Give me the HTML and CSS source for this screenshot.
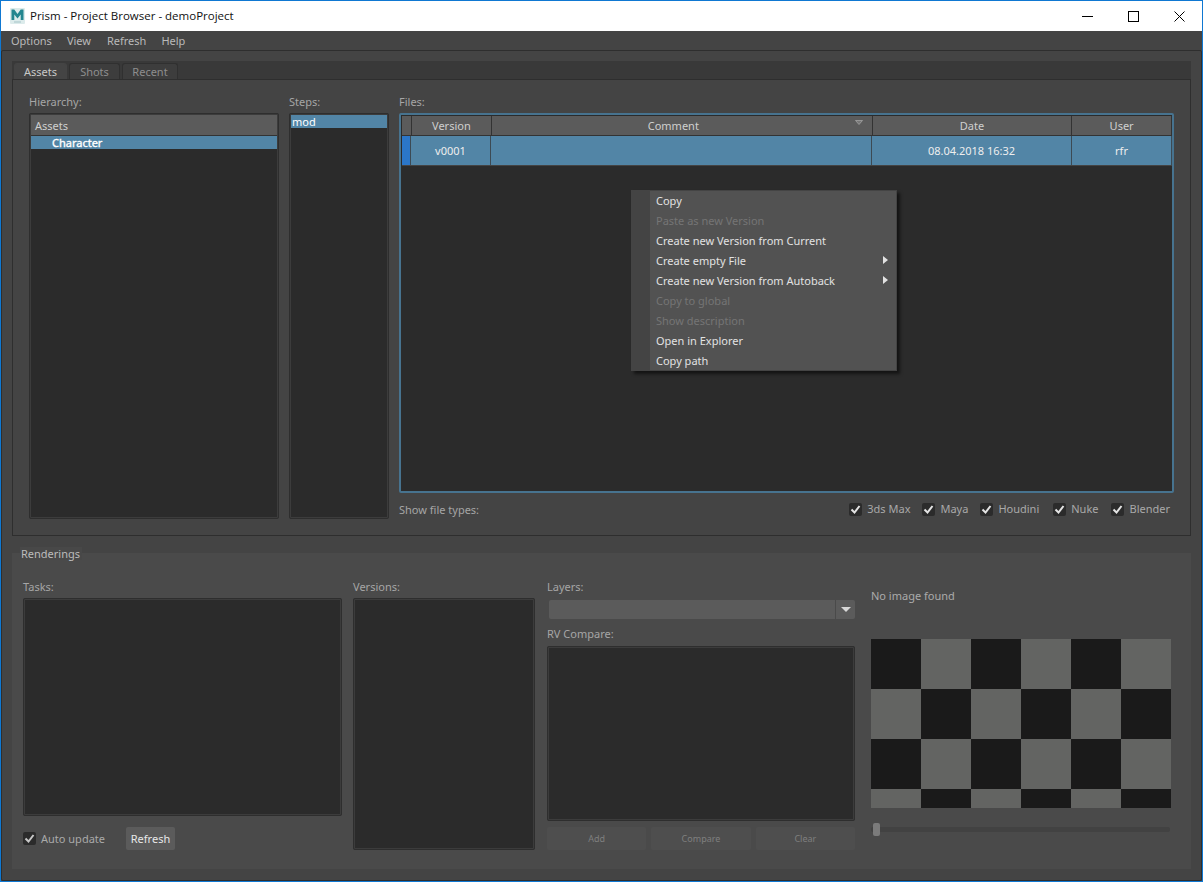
FILE: index.html
```html
<!DOCTYPE html>
<html lang="en">
<head>
<meta charset="utf-8">
<title>Prism - Project Browser - demoProject</title>
<link rel="stylesheet" href="styles.css">
</head>
<body>
<div class="window">
  <header class="titlebar">
    <svg class="logo" width="15" height="16" viewBox="0 0 15 16"><rect width="15" height="16" rx="1" fill="#dcebeb"/><path d="M1.500 12V1.500h2.800L7.500 6l3.200-4.500h2.800V12h-2.800V6.500L7.500 10.500 4.300 6.500V12z" fill="#23868f"/><rect x="4" y="13.500" width="7" height="1" fill="#a3c4c8"/></svg>
    <span class="title">Prism - Project Browser - demoProject</span>
    <div class="winbtns">
      <span class="winbtn"><svg width="11" height="11" viewBox="0 0 11 11"><path d="M0 5.500h11" stroke="#000" fill="none"/></svg></span>
      <span class="winbtn"><svg width="11" height="11" viewBox="0 0 11 11"><rect x=".5" y=".5" width="10" height="10" stroke="#000" fill="none"/></svg></span>
      <span class="winbtn"><svg width="11" height="11" viewBox="0 0 11 11"><path d="M.5 .5l10 10M10.500 .5l-10 10" stroke="#000" fill="none"/></svg></span>
    </div>
  </header>
  <nav class="menubar">
    <span class="menu-item">Options</span>
    <span class="menu-item menu-view">View</span>
    <span class="menu-item">Refresh</span>
    <span class="menu-item">Help</span>
  </nav>
  <main class="central">
    <div class="tabbar">
      <span class="tab tab-active">Assets</span>
      <span class="tab tab-shots">Shots</span>
      <span class="tab tab-recent">Recent</span>
    </div>
    <section class="pane">
      <div class="col col-hier">
        <div class="label">Hierarchy:</div>
        <div class="list list-fill">
          <div class="tree-head">Assets</div>
          <div class="tree-row">Character</div>
        </div>
      </div>
      <div class="col col-steps">
        <div class="label">Steps:</div>
        <div class="list list-fill">
          <div class="step-row">mod</div>
        </div>
      </div>
      <div class="col col-files">
        <div class="label">Files:</div>
        <div class="files">
          <div class="thead">
            <span class="th c-corner"></span>
            <span class="th c-ver">Version</span>
            <span class="th c-com-h">Comment<svg class="sort" width="8" height="5" viewBox="0 0 8 5"><path d="M.5 .5h7L4 4.500z" fill="#777" stroke="#aaa" stroke-width=".7"/></svg></span>
            <span class="th c-date">Date</span>
            <span class="th c-user">User</span>
          </div>
          <div class="trow">
            <span class="td c-mark"></span>
            <span class="td c-ver">v0001</span>
            <span class="td c-com"></span>
            <span class="td c-date">08.04.2018 16:32</span>
            <span class="td c-user">rfr</span>
          </div>
          <div class="ctx">
            <div class="ctx-item">Copy</div>
            <div class="ctx-item is-off">Paste as new Version</div>
            <div class="ctx-item">Create new Version from Current</div>
            <div class="ctx-item">Create empty File<i class="ctx-arrow"></i></div>
            <div class="ctx-item">Create new Version from Autoback<i class="ctx-arrow"></i></div>
            <div class="ctx-item is-off">Copy to global</div>
            <div class="ctx-item is-off">Show description</div>
            <div class="ctx-item">Open in Explorer</div>
            <div class="ctx-item">Copy path</div>
          </div>
        </div>
        <div class="types">
          <span class="label-inline">Show file types:</span>
          <div class="checks">
            <label class="check c1"><span class="box"><svg width="13" height="13" viewBox="0 0 13 13"><path d="M2.500 6.500l3 3 5-6.500" stroke="#e4e4e4" stroke-width="2" fill="none"/></svg></span>3ds Max</label>
            <label class="check c2"><span class="box"><svg width="13" height="13" viewBox="0 0 13 13"><path d="M2.500 6.500l3 3 5-6.500" stroke="#e4e4e4" stroke-width="2" fill="none"/></svg></span>Maya</label>
            <label class="check c3"><span class="box"><svg width="13" height="13" viewBox="0 0 13 13"><path d="M2.500 6.500l3 3 5-6.500" stroke="#e4e4e4" stroke-width="2" fill="none"/></svg></span>Houdini</label>
            <label class="check c4"><span class="box"><svg width="13" height="13" viewBox="0 0 13 13"><path d="M2.500 6.500l3 3 5-6.500" stroke="#e4e4e4" stroke-width="2" fill="none"/></svg></span>Nuke</label>
            <label class="check c5"><span class="box"><svg width="13" height="13" viewBox="0 0 13 13"><path d="M2.500 6.500l3 3 5-6.500" stroke="#e4e4e4" stroke-width="2" fill="none"/></svg></span>Blender</label>
          </div>
        </div>
      </div>
    </section>
    <section class="group">
      <span class="legend">Renderings</span>
      <div class="col col-tasks">
        <div class="label">Tasks:</div>
        <div class="list tasks-list"></div>
        <div class="tasks-foot">
          <label class="check auto"><span class="box"><svg width="13" height="13" viewBox="0 0 13 13"><path d="M2.500 6.500l3 3 5-6.500" stroke="#c8c8c8" stroke-width="2" fill="none"/></svg></span>Auto update</label>
          <button class="btn">Refresh</button>
        </div>
      </div>
      <div class="col col-versions">
        <div class="label">Versions:</div>
        <div class="list versions-list"></div>
      </div>
      <div class="col col-layers">
        <div class="label">Layers:</div>
        <div class="combo"><span class="combo-field"></span><span class="combo-btn"><i class="combo-arrow"></i></span></div>
        <div class="label label-rv">RV Compare:</div>
        <div class="list rv-list"></div>
        <div class="rv-btns">
          <button class="btn-off">Add</button>
          <button class="btn-off">Compare</button>
          <button class="btn-off">Clear</button>
        </div>
      </div>
      <div class="col col-preview">
        <div class="noimage">No image found</div>
        <div class="checker"></div>
        <div class="slider"><span class="handle"></span></div>
      </div>
    </section>
  </main>
</div>
</body>
</html>
```
FILE: styles.css
```css
* { box-sizing: border-box; }
html, body { margin: 0; padding: 0; }
body { width: 1203px; height: 882px; overflow: hidden; background: #444; font: 11px/16px "Noto Sans", "Open Sans", sans-serif; color: #bdbdbd; }
.window { width: 1203px; height: 882px; border: 1px solid #0f78d2; display: flex; flex-direction: column; }

.titlebar { height: 30px; flex: none; background: #fff; display: flex; align-items: center; padding-left: 9px; color: #000; }
.logo { flex: none; margin-top: 0; }
.title { margin-left: 5px; font: 11.500px/16px "Open Sans", sans-serif; color: #111; }
.winbtns { margin-left: auto; display: flex; }
.winbtn { width: 46px; height: 30px; display: flex; align-items: center; justify-content: center; }

.menubar { height: 19px; flex: none; background: #444; display: flex; padding-left: 10px; gap: 15px; align-items: center; color: #b9b9b9; }
.menu-view { margin-right: 1px; }

.central { flex: 1; min-height: 0; background: #444; border: 1px solid #2e2e2e; border-radius: 2px; padding: 10px 10px 0 10px; margin: 0; }
.tabbar { height: 18px; background: #393939; display: flex; padding-left: 2px; gap: 2px; align-items: flex-end; }
.tab { height: 16px; line-height: 15px; text-align: center; color: #8e8e8e; background: #3d3d3d; border: 1px solid #303030; border-bottom: 0; border-radius: 3px 3px 0 0; }
.tab-active { width: 53px; background: #444; color: #c8c8c8; border-color: #444; }
.tab-shots { width: 51px; }
.tab-recent { width: 56px; }

.pane { height: 457px; border: 1px solid #2e2e2e; display: flex; gap: 10px; padding: 16px; }
.col { display: flex; flex-direction: column; flex: none; }
.col-hier { width: 250px; }
.col-steps { width: 100px; }
.col-files { width: 775px; }
.label { height: 17px; line-height: 11px; color: #a6a6a6; }

.list { background: #2b2b2b; border: 2px solid #3c3c3c; outline: 1px solid #2e2e2e; outline-offset: -1px; border-radius: 2px; }
.list-fill { flex: 1; }
.tree-head { height: 21px; line-height: 22px; padding-left: 4px; background: #5b5b5b; color: #cfcfcf; border-bottom: 1px solid #333; }
.tree-row { height: 13px; line-height: 13px; padding-left: 21px; background: #5285a6; color: #fff; -webkit-text-stroke: .35px #fff; }
.step-row { height: 13px; line-height: 13px; padding-left: 1px; background: #5285a6; color: #fff; }

.files { height: 380px; position: relative; background: #2b2b2b; border: 2px solid #47738f; border-radius: 2px; padding: 1px 0 0 1px; }
.thead { display: flex; height: 20px; }
.th { background: #5b5b5b; border-right: 1px solid #333; border-bottom: 1px solid #333; text-align: center; line-height: 19px; color: #cfcfcf; position: relative; }
.trow { display: flex; height: 30px; border-bottom: 1px solid #444; }
.td { background: #5285a6; border-right: 1px solid #3c4a54; text-align: center; line-height: 29px; color: #eee; }
.c-corner { width: 10px; }
.c-mark { width: 9px; background: #2b76c8; }
.c-ver { width: 80px; }
.c-com { width: 381px; }
.c-com-h { width: 382px; padding-right: 17px; }
.c-date { width: 200px; }
.c-user { width: 100px; }
.sort { position: absolute; right: 9px; top: 4px; }

.ctx { position: absolute; left: 230px; top: 75px; width: 266px; height: 181px; padding: 0 0 0 18px; background: #444; border: 1px solid #444; box-shadow: 3px 3px 3px rgba(0,0,0,.55); }
.ctx::before { content: ""; position: absolute; left: 18px; right: 0; top: 0; bottom: 0; background: #525252; }
.ctx-item { position: relative; height: 20px; line-height: 20px; padding-left: 6px; color: #e2e2e2; }
.ctx-item.is-off { color: #757575; }
.ctx-arrow { position: absolute; right: 8px; top: 5px; border-left: 5px solid #e2e2e2; border-top: 4px solid transparent; border-bottom: 4px solid transparent; }

.types { flex: 1; display: flex; align-items: center; justify-content: space-between; padding-top: 8px; color: #a6a6a6; }
.label-inline { display: block; }
.checks { display: flex; margin-top: -2px; }
.check { display: flex; align-items: center; color: #a9a9a9; }
.box { width: 13px; height: 13px; background: #2b2b2b; border-radius: 2px; display: block; margin-right: 5px; flex: none; }
.box svg { display: block; }
.c1 { margin-right: 12px; }
.c2 { margin-right: 12px; }
.c3 { margin-right: 14px; }
.c4 { margin-right: 13px; }
.c5 { margin-right: 4px; }

.group { position: relative; margin-top: 17px; height: 316px; background: #4a4a4a; display: flex; padding: 28px 0 0 11px; }
.legend { position: absolute; left: 8px; top: -6px; padding: 0 2px 0 1px; height: 13px; line-height: 13px; background: #484848; color: #bcbcbc; }
.col-tasks { width: 319px; margin-right: 11px; }
.tasks-list { height: 218px; }
.tasks-foot { display: flex; align-items: center; margin-top: 11px; height: 23px; }
.auto { width: 103px; }
.btn { width: 49px; height: 23px; padding: 0; border: 0; border-radius: 2px; background: #5b5b5b; color: #e8e8e8; font: inherit; }
.col-versions { width: 182px; margin-right: 12px; }
.versions-list { height: 252px; }
.col-layers { width: 308px; margin-right: 16px; }
.combo { height: 19px; margin: 2px 0 0 2px; flex: none; display: flex; background: #5b5b5b; border-radius: 2px; }
.combo-field { flex: 1; }
.combo-btn { width: 20px; border-left: 1px solid #4a4a4a; display: flex; align-items: center; justify-content: center; }
.combo-arrow { border-top: 5px solid #d8d8d8; border-left: 5px solid transparent; border-right: 5px solid transparent; }
.label-rv { margin-top: 9px; height: 18px; }
.rv-list { height: 175px; }
.rv-btns { display: flex; gap: 5px; margin-top: 6px; }
.btn-off { flex: 1; height: 23px; padding: 0; border: 0; border-radius: 2px; background: #4e4e4e; color: #7f7f7f; font: 9px/16px "Noto Sans", sans-serif; }
.col-preview { width: 300px; }
.noimage { height: 43px; padding-top: 1px; line-height: 16px; color: #ababab; margin-top: 6px; margin-bottom: 9px; }
.checker { height: 169px; flex: none; background: repeating-conic-gradient(#636462 0 25%, #1a1a1a 0 50%) 0 0 / 100px 100px; }
.slider { position: relative; height: 5px; margin-top: 19px; background: #424242; border-radius: 2px; margin-right: 1px; }
.handle { position: absolute; left: 2px; top: -4px; width: 7px; height: 13px; background: #7b7b7b; border-radius: 2px; }
```
